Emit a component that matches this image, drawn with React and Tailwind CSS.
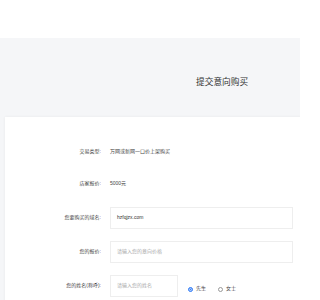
import React from 'react'

function Row({ label, children, className }) {
  return (
    <div className={"flex items-center h-[22px] " + (className || '')}>
      <div className="w-[96px] text-right text-[5px] text-[#444]">{label}</div>
      <div className="ml-[9px] flex items-center h-full">{children}</div>
    </div>
  )
}

export default function App() {
  return (
    <div className="w-[300px] h-[300px] overflow-hidden bg-[#f5f6f8] font-['Liberation_Sans','Noto_Sans_CJK_SC',sans-serif]">
      <div className="h-[38px] bg-white"></div>
      <div className="h-[79px] flex items-center pl-[196px]">
        <h1 className="text-[8.7px] text-[#333] leading-none mt-[9px]">提交意向购买</h1>
      </div>
      <div className="ml-[5px] w-[320px] h-[200px] bg-white shadow-[0_0_3px_rgba(0,0,0,0.06)] pt-[24px]">
        <Row label="交易类型:">
          <span className="text-[5px] text-[#444]">万网或新网一口价上架购买</span>
        </Row>
        <Row label="店家报价:" className="mt-[10px]">
          <span className="text-[5px] text-[#444]">5000元</span>
        </Row>
        <Row label="您要购买的域名:" className="mt-[12px]">
          <div className="w-[183px] h-[22px] border border-[#eeeeee] flex items-center pl-[6px] text-[5px] text-[#333]">
            hzfqjzx.com
          </div>
        </Row>
        <Row label="您的报价:" className="mt-[12px]">
          <div className="w-[183px] h-[22px] border border-[#eeeeee] flex items-center pl-[6px] text-[5px] text-[#aaa]">
            请输入您的意向价格
          </div>
        </Row>
        <Row label="您的姓名(称呼):" className="mt-[12px]">
          <div className="w-[68px] h-[22px] border border-[#eeeeee] flex items-center pl-[6px] text-[5px] text-[#aaa]">
            请输入您的姓名
          </div>
          <div className="flex items-center ml-[10px] mt-[6px]">
            <span className="w-[5px] h-[5px] rounded-full border border-[#3b82f6] bg-[#3b82f6] shadow-[inset_0_0_0_0.5px_#fff]"></span>
            <span className="ml-[3px] text-[5px] text-[#444]">先生</span>
            <span className="ml-[12px] w-[5px] h-[5px] rounded-full border border-[#999]"></span>
            <span className="ml-[3px] text-[5px] text-[#444]">女士</span>
          </div>
        </Row>
      </div>
    </div>
  )
}
